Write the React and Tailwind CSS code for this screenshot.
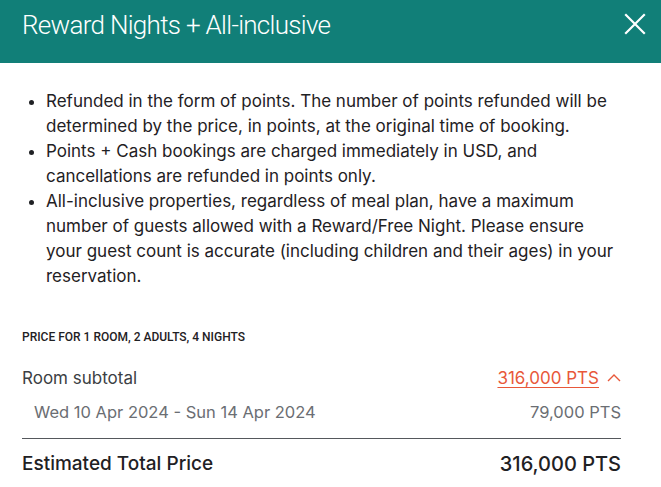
import React from 'react';

const notes = [
  'Refunded in the form of points. The number of points refunded will be determined by the price, in points, at the original time of booking.',
  'Points + Cash bookings are charged immediately in USD, and cancellations are refunded in points only.',
  'All-inclusive properties, regardless of meal plan, have a maximum number of guests allowed with a Reward/Free Night. Please ensure your guest count is accurate (including children and their ages) in your reservation.',
];

const App = () => {
  return (
    <div className="w-[661px] h-[487px] bg-white overflow-hidden" style={{ fontFamily: 'Inter, "Liberation Sans", sans-serif' }}>
      {/* Header */}
      <div className="h-[63px] bg-[#117f78] flex items-start justify-between pl-[22px] pr-[14px] pt-[6px]">
        <h1 className="text-[26px] font-light text-white leading-[38px] tracking-[-0.7px]" style={{ fontFamily: 'Roboto, sans-serif' }}>
          Reward Nights + All-inclusive
        </h1>
        <button className="mt-[6px] text-white">
          <svg width="24" height="24" viewBox="0 0 24 24" fill="none" stroke="currentColor" strokeWidth="2.2" strokeLinecap="square">
            <path d="M3 3 L21 21 M21 3 L3 21" />
          </svg>
        </button>
      </div>

      {/* Notes */}
      <div className="pl-[22px] pr-[41px] pt-[26px]">
        <ul className="list-disc pl-[24px] text-[17px] leading-[25px] text-[#1f2124]">
          {notes.map((n, i) => (
            <li key={i}>{n}</li>
          ))}
        </ul>
      </div>

      {/* Price */}
      <div className="pl-[22px] pr-[40px] pt-[38px]">
        <div className="text-[12px] font-medium text-[#1f2124] uppercase leading-[20px]" style={{ fontFamily: 'Roboto, sans-serif' }}>
          Price for 1 room, 2 adults, 4 nights
        </div>
        <div className="flex justify-between items-center mt-[19px] text-[17px] leading-[24px]">
          <span className="text-[#3c3f44]">Room subtotal</span>
          <span className="flex items-center gap-[8px] text-[#e8583a]">
            <span className="underline underline-offset-[3px]">316,000 PTS</span>
            <svg width="14" height="14" viewBox="0 0 14 14" fill="none" stroke="currentColor" strokeWidth="1.4">
              <path d="M1 10 L7 4 L13 10" />
            </svg>
          </span>
        </div>
        <div className="flex justify-between items-center mt-[10px] pl-[12px] text-[16.5px] leading-[24px] text-[#6b6e73]">
          <span>Wed 10 Apr 2024 - Sun 14 Apr 2024</span>
          <span>79,000 PTS</span>
        </div>
        <div className="border-t border-[#55585c] mt-[14px]" />
        <div className="flex justify-between items-center mt-[12px] font-medium leading-[26px] text-[#1f2124]">
          <span className="text-[19px]">Estimated Total Price</span>
          <span className="text-[20px]">316,000 PTS</span>
        </div>
      </div>
    </div>
  );
};

export default App;
